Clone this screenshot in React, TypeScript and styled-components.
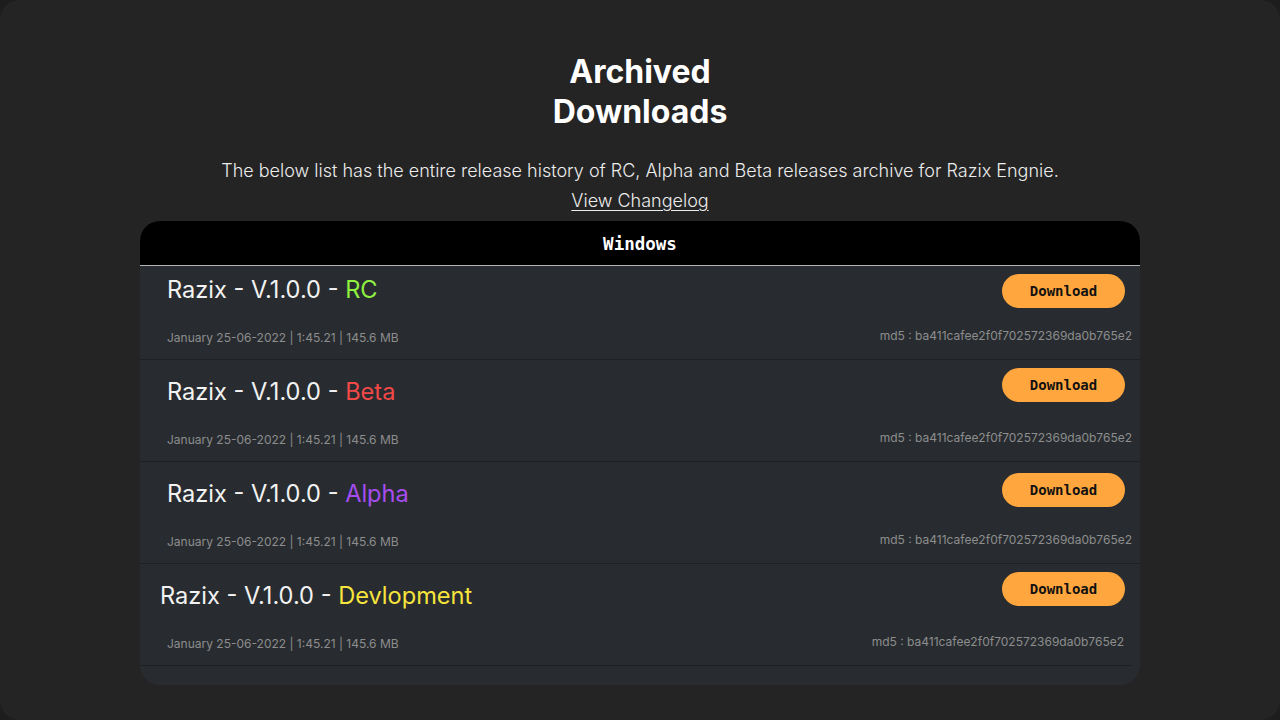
import styled, { createGlobalStyle } from 'styled-components';

const GlobalStyle = createGlobalStyle`
  html, body {
    margin: 0;
    padding: 0;
    background: #1d1d1d;
  }
  * {
    box-sizing: border-box;
  }
`;

type Release = {
  tag: string;
  color: string;
  titleTop: number;
  titleShift: number;
  buttonTop: number;
  last?: boolean;
};

const releases: Release[] = [
  { tag: 'RC', color: '#8ff03f', titleTop: 3, titleShift: 0, buttonTop: 0 },
  { tag: 'Beta', color: '#f24848', titleTop: 11, titleShift: 0, buttonTop: 0 },
  { tag: 'Alpha', color: '#a64cf0', titleTop: 11, titleShift: 0, buttonTop: 3 },
  { tag: 'Devlopment', color: '#f7e43c', titleTop: 11, titleShift: -7, buttonTop: 0, last: true },
];

const App = () => {
  return (
    <>
      <GlobalStyle />
      <Page>
        <Title>
          Archived
          <br />
          Downloads
        </Title>
        <Subtitle>
          The below list has the entire release history of RC, Alpha and Beta releases archive for Razix Engnie.
        </Subtitle>
        <ChangelogLink href="#">View Changelog</ChangelogLink>
        <Card>
          <CardHeader>Windows</CardHeader>
          {releases.map((r) => (
            <Row key={r.tag} last={r.last}>
              <TopLine height={r.titleTop + 26}>
                <ReleaseTitle top={r.titleTop} shift={r.titleShift}>
                  Razix - V.1.0.0 - <Tag color={r.color}>{r.tag}</Tag>
                </ReleaseTitle>
                <DownloadButton top={r.buttonTop}>Download</DownloadButton>
              </TopLine>
              <BottomLine>
                <Meta>January 25-06-2022 | 1:45.21 | 145.6 MB</Meta>
                <Hash last={r.last}>md5 : ba411cafee2f0f702572369da0b765e2</Hash>
              </BottomLine>
            </Row>
          ))}
        </Card>
      </Page>
    </>
  );
};

export default App;

const Page = styled.div`
  width: 1280px;
  height: 720px;
  background: #242424;
  border-radius: 20px;
  display: flex;
  flex-direction: column;
  align-items: center;
  padding-top: 52px;
  font-family: 'Inter', 'Noto Sans', sans-serif;
  color: #ffffff;
`;

const Title = styled.h1`
  margin: 0;
  font-size: 32px;
  font-weight: 700;
  line-height: 40px;
  text-align: center;
  color: #ffffff;
`;

const Subtitle = styled.p`
  margin: 27px 0 0;
  font-size: 18px;
  font-weight: 300;
  line-height: 24px;
  color: #ececec;
  text-align: center;
`;

const ChangelogLink = styled.a`
  margin-top: 6px;
  font-size: 18px;
  font-weight: 300;
  line-height: 24px;
  color: #ececec;
  text-decoration: underline;
  text-underline-offset: 3px;
`;

const Card = styled.div`
  margin-top: 8px;
  width: 1000px;
  background: #282c30;
  border-radius: 20px;
  overflow: hidden;
  padding-bottom: 19px;
`;

const CardHeader = styled.div`
  height: 45px;
  padding-top: 1px;
  background: #000000;
  border-bottom: 1px solid #b4b4b4;
  display: flex;
  align-items: center;
  justify-content: center;
  font-family: 'DejaVu Sans Mono', monospace;
  font-weight: 700;
  font-size: 17.5px;
  color: #ffffff;
`;

const Row = styled.div<{ last?: boolean }>`
  display: flex;
  flex-direction: column;
  padding: 8px ${(p) => (p.last ? 0 : 8)}px 13px 27px;
  margin-right: ${(p) => (p.last ? 8 : 0)}px;
  border-bottom: 1px solid #1e2124;
`;

const TopLine = styled.div<{ height: number }>`
  height: ${(p) => p.height}px;
  display: flex;
  justify-content: space-between;
  align-items: flex-start;
`;

const ReleaseTitle = styled.div<{ top: number; shift: number }>`
  margin-top: ${(p) => p.top}px;
  margin-left: ${(p) => p.shift}px;
  font-size: 23.6px;
  font-weight: 400;
  line-height: 26px;
  color: #f2f2f2;
`;

const Tag = styled.span<{ color: string }>`
  color: ${(p) => p.color};
`;

const DownloadButton = styled.button<{ top: number }>`
  flex-shrink: 0;
  margin-top: ${(p) => p.top}px;
  margin-right: 7px;
  width: 123px;
  height: 34px;
  border: none;
  border-radius: 17px;
  background: #ffa63e;
  color: #111111;
  font-family: 'DejaVu Sans Mono', monospace;
  font-weight: 700;
  font-size: 14px;
  cursor: pointer;
`;

const BottomLine = styled.div`
  margin-top: 27px;
  display: flex;
  justify-content: space-between;
  align-items: flex-start;
`;

const Meta = styled.div`
  font-size: 12px;
  line-height: 16px;
  color: #8d8d8d;
`;

const Hash = styled.div<{ last?: boolean }>`
  margin-top: -2px;
  font-size: 12px;
  line-height: 16px;
  color: #8d8d8d;
  padding-right: ${(p) => (p.last ? 8 : 0)}px;
`;
